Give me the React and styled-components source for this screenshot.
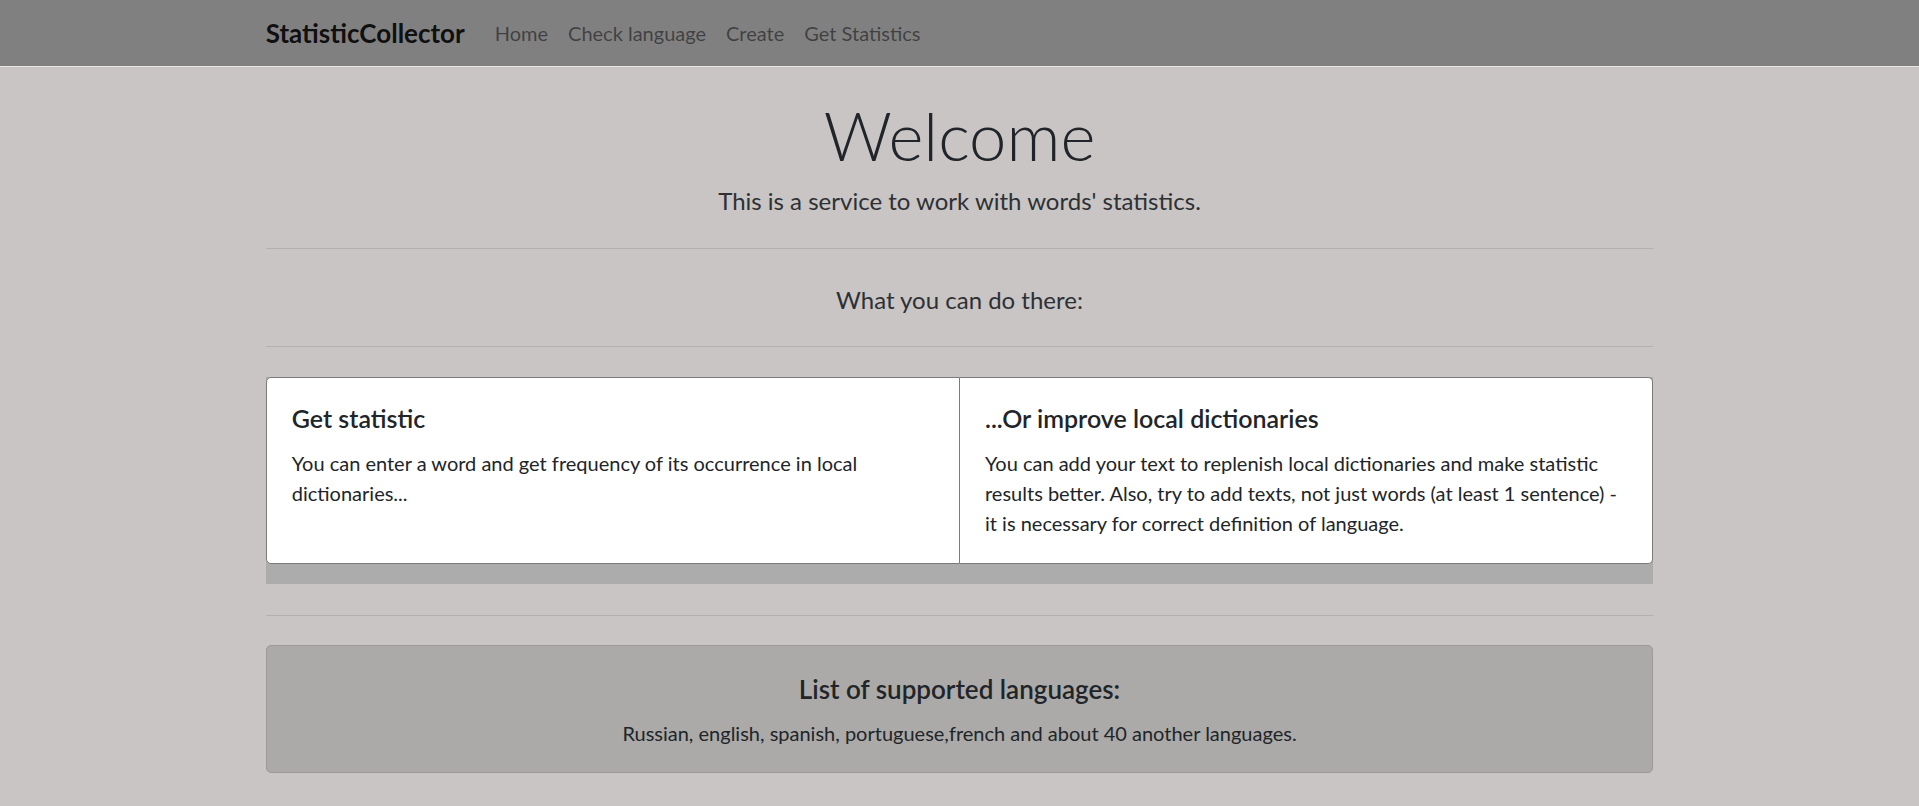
import React from 'react';
import styled, { createGlobalStyle } from 'styled-components';

const GlobalStyle = createGlobalStyle`
  * {
    box-sizing: border-box;
  }
  html, body {
    margin: 0;
    padding: 0;
  }
  body {
    background-color: #c8c5c4;
    font-family: Lato, "Open Sans", sans-serif;
    font-size: 20px;
    line-height: 1.5;
    color: #212529;
  }
`;

const Navbar = styled.nav`
  height: 67px;
  background-color: #808080;
  border-bottom: 1px solid #e6e6e6;
`;

const Container = styled.div`
  max-width: 1425px;
  margin: 0 auto;
  padding: 0 18.75px;
`;

const NavInner = styled(Container)`
  display: flex;
  align-items: center;
  height: 100%;
`;

const Brand = styled.a`
  font-size: 26px;
  font-weight: 700;
  color: rgba(0, 0, 0, 0.9);
  margin-right: 20px;
  text-decoration: none;
`;

const NavLink = styled.a`
  padding: 0 10px;
  font-size: 20px;
  color: rgba(0, 0, 0, 0.5);
  text-decoration: none;
`;

const Hero = styled.header`
  padding-top: 26px;
  text-align: center;
`;

const Title = styled.h1`
  margin: 0;
  font-size: 67px;
  font-weight: 300;
  line-height: 84px;
`;

const Lead = styled.p`
  margin: 7px 0 0;
  font-size: 24px;
  font-weight: 400;
  line-height: 34px;
  color: #2e3034;
`;

const Divider = styled.hr`
  margin: ${(props) => props.$m || '30px 0 0'};
  border: 0;
  border-top: 1px solid rgba(0, 0, 0, 0.1);
`;

const SectionHeading = styled.p`
  margin: 32px 0 27px;
  text-align: center;
  font-size: 24px;
  line-height: 37.5px;
  color: #2e3034;
`;

// grey band peeking out under the cards
const CardBand = styled.div`
  margin-top: 30px;
  padding-bottom: 20px;
  background-color: #acacac;
`;

const CardGroup = styled.div`
  display: flex;
`;

const Card = styled.div`
  flex: 1 1 0;
  background-color: #fff;
  border: 1px solid #7b7b7b;
  border-radius: 0;

  &:first-child {
    border-top-left-radius: 5px;
    border-bottom-left-radius: 5px;
  }
  & + & {
    border-left: 0;
    border-top-right-radius: 5px;
    border-bottom-right-radius: 5px;
  }
`;

const CardBody = styled.div`
  padding: 25px;
`;

const CardTitle = styled.h5`
  margin: 0 0 15px;
  font-size: 25px;
  font-weight: 600;
  line-height: 30px;
`;

const CardText = styled.p`
  margin: 0;
  font-size: 20px;
  line-height: 30px;
`;

const LangBox = styled.section`
  margin-top: 29px;
  padding: 28px 20px 24px;
  text-align: center;
  background-color: #abaaa8;
  border: 1px solid #9b9a98;
  border-radius: 5px;
`;

const LangTitle = styled.h4`
  margin: 0 0 13px;
  font-size: 26px;
  font-weight: 600;
  line-height: 31px;
`;

const LangText = styled.p`
  margin: 0;
  font-size: 20px;
  line-height: 30px;
`;

const links = ['Home', 'Check language', 'Create', 'Get Statistics'];

const cards = [
  {
    title: 'Get statistic',
    text: 'You can enter a word and get frequency of its occurrence in local dictionaries...',
  },
  {
    title: '...Or improve local dictionaries',
    text: 'You can add your text to replenish local dictionaries and make statistic results better. Also, try to add texts, not just words (at least 1 sentence) - it is necessary for correct definition of language.',
  },
];

export default function App() {
  return (
    <>
      <GlobalStyle />
      <Navbar>
        <NavInner>
          <Brand href="#">StatisticCollector</Brand>
          {links.map((l) => (
            <NavLink key={l} href="#">
              {l}
            </NavLink>
          ))}
        </NavInner>
      </Navbar>
      <Container>
        <Hero>
          <Title>Welcome</Title>
          <Lead>This is a service to work with words' statistics.</Lead>
        </Hero>
        <Divider $m="30px 0 0" />
        <SectionHeading>What you can do there:</SectionHeading>
        <Divider $m="0" />
        <CardBand>
          <CardGroup>
            {cards.map((c) => (
              <Card key={c.title}>
                <CardBody>
                  <CardTitle>{c.title}</CardTitle>
                  <CardText>{c.text}</CardText>
                </CardBody>
              </Card>
            ))}
          </CardGroup>
        </CardBand>
        <Divider $m="31px 0 0" />
        <LangBox>
          <LangTitle>List of supported languages:</LangTitle>
          <LangText>
            Russian, english, spanish, portuguese,french and about 40 another languages.
          </LangText>
        </LangBox>
      </Container>
    </>
  );
}
